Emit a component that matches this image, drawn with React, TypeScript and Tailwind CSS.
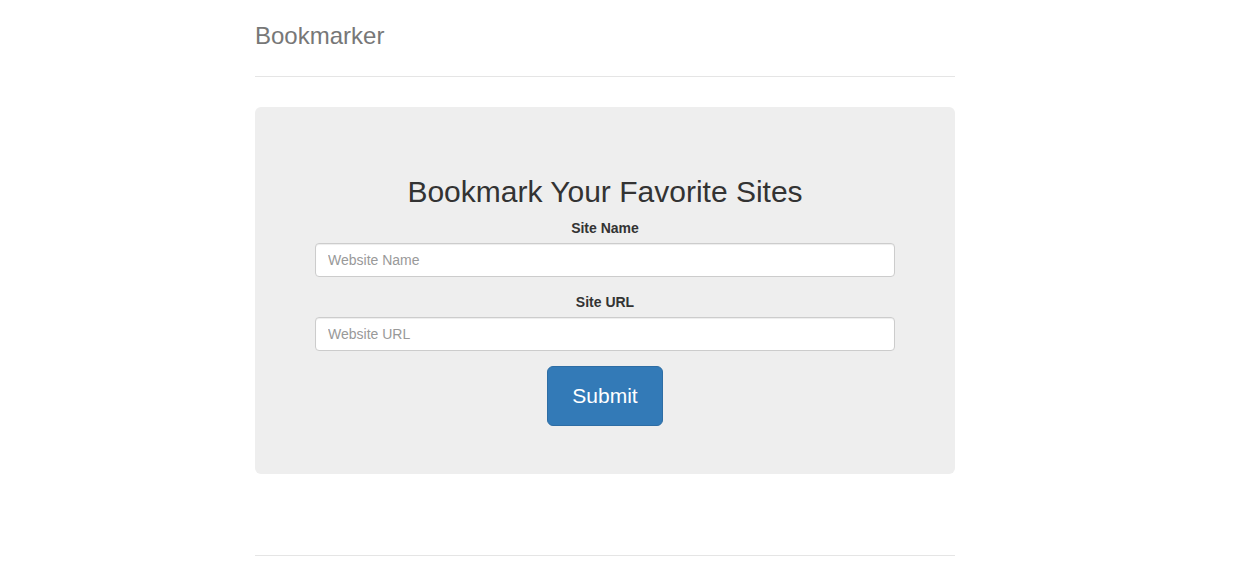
const App = () => {
  return (
    <div className="min-h-screen bg-white pt-4 text-[14px] text-[#333] font-['Liberation_Sans',Arial,sans-serif]">
      <div className="ml-[255px] w-[700px]">
        {/* Header */}
        <div className="border-b border-[#e5e5e5] pb-5">
          <h3 className="m-0 text-[24px] leading-[40px] text-[#777]">Bookmarker</h3>
        </div>

        {/* Jumbotron */}
        <div className="mt-[30px] mb-[30px] rounded-[6px] bg-[#eee] px-[60px] py-[48px] text-center">
          <h2 className="mt-5 mb-2.5 text-[30px] leading-[1.1] text-[#333]">Bookmark Your Favorite Sites</h2>
          <form onSubmit={(e) => e.preventDefault()}>
            <div className="mb-[15px]">
              <label className="mb-[5px] inline-block text-[14px] font-bold leading-5">Site Name</label>
              <input
                type="text"
                placeholder="Website Name"
                className="block h-[34px] w-full rounded-[4px] border border-[#ccc] bg-white px-3 py-1.5 text-[14px] text-[#555] shadow-[inset_0_1px_1px_rgba(0,0,0,0.075)] outline-none placeholder:text-[#999]"
              />
            </div>
            <div className="mb-[15px]">
              <label className="mb-[5px] inline-block text-[14px] font-bold leading-5">Site URL</label>
              <input
                type="text"
                placeholder="Website URL"
                className="block h-[34px] w-full rounded-[4px] border border-[#ccc] bg-white px-3 py-1.5 text-[14px] text-[#555] shadow-[inset_0_1px_1px_rgba(0,0,0,0.075)] outline-none placeholder:text-[#999]"
              />
            </div>
            <button
              type="submit"
              className="h-[60px] rounded-[6px] border border-[#2e6da4] bg-[#337ab7] px-6 text-[21px] leading-[1.3333] text-white"
            >
              Submit
            </button>
          </form>
        </div>

        <div className="h-[51px]" />

        {/* Footer */}
        <div className="border-t border-[#e5e5e5] pt-[19px]" />
      </div>
    </div>
  );
};

export default App;
